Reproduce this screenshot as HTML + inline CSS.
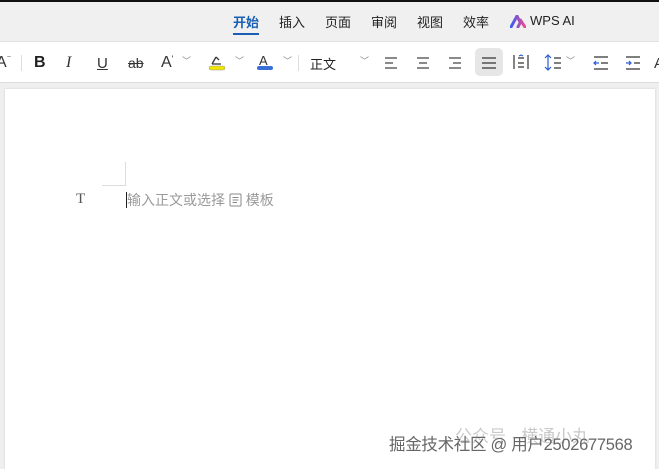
<!DOCTYPE html>
<html><head><meta charset="utf-8"><style>
*{margin:0;padding:0;box-sizing:border-box}
body{width:659px;height:465px;overflow:hidden;background:#efefef;font-family:"Liberation Sans","Noto Sans CJK SC",sans-serif;position:relative}
.top{position:absolute;left:0;top:0;width:659px;height:40px;background:#f0f0f0;border-top:2px solid #111}
.tab{position:absolute;top:10px;font-size:13px;color:#222}
.tb{position:absolute;left:0;top:41px;width:659px;height:42px;background:#fff;border-top:1px solid #e2e2e2;border-bottom:1px solid #ddd}
.page{position:absolute;left:5px;top:89px;width:650px;height:380px;background:#fff;box-shadow:0 0 2px #ccc}
.i{position:absolute;top:0;height:42px;display:flex;align-items:center;justify-content:center}
.car{position:absolute;font-size:9px;color:#888;top:12px}
</style></head><body>
<div class="top">
<div class="tab" style="left:233px;color:#1a5fb4;font-weight:bold">开始</div>
<div style="position:absolute;left:233px;top:31px;width:26px;height:2px;background:#1a5fb4"></div>
<div class="tab" style="left:279px">插入</div>
<div class="tab" style="left:325px">页面</div>
<div class="tab" style="left:371px">审阅</div>
<div class="tab" style="left:417px">视图</div>
<div class="tab" style="left:463px">效率</div>
<svg style="position:absolute;left:510px;top:13px" width="16" height="13"><defs><linearGradient id="g" x1="0" x2="1"><stop offset="0" stop-color="#3b5bf5"/><stop offset="1" stop-color="#f04a8a"/></linearGradient></defs><path d="M1 12 L7 1 L10 7 M8 12 L11 6 L15 12" stroke="url(#g)" stroke-width="3" fill="none" stroke-linecap="round"/></svg>
<div class="tab" style="left:530px;top:11px">WPS AI</div>
</div>
<div class="tb">
<div class="i" style="left:-4px;font-size:16px;color:#333">A<span style="font-size:9px;margin-top:-10px">⁻</span></div>
<div style="position:absolute;left:21px;top:13px;width:1px;height:16px;background:#ddd"></div>
<div class="i" style="left:34px;font-size:16px;font-weight:bold;color:#222">B</div>
<div class="i" style="left:66px;font-size:16px;font-style:italic;font-family:'Liberation Serif';color:#333">I</div>
<div class="i" style="left:97px;font-size:15px;text-decoration:underline;color:#333">U</div>
<div class="i" style="left:128px;font-size:14px;text-decoration:line-through;color:#333">ab</div>
<div class="i" style="left:161px;font-size:16px;color:#333">A<span style="font-size:9px;margin-top:-8px">ʹ</span></div>
<div class="car" style="left:182px">﹀</div>
<svg style="position:absolute;left:208px;top:12px" width="18" height="18"><path d="M4 10 L8 3 M8 3 L11 6 M4 10 L13 10" stroke="#333" stroke-width="1.3" fill="none"/><rect x="1" y="12" width="16" height="4" rx="2" fill="#f0e600" stroke="#999" stroke-width=".5"/></svg>
<div class="car" style="left:235px">﹀</div>
<svg style="position:absolute;left:256px;top:12px" width="18" height="18"><text x="3" y="11" font-size="13" fill="#333" font-family="Liberation Sans">A</text><rect x="1" y="12" width="16" height="4" rx="2" fill="#3a6fd8"/></svg>
<div class="car" style="left:283px">﹀</div>
<div style="position:absolute;left:298px;top:13px;width:1px;height:16px;background:#ddd"></div>
<div class="i" style="left:310px;font-size:13px;color:#222">正文</div>
<div class="car" style="left:360px">﹀</div>
<svg style="position:absolute;left:383px;top:14px" width="110" height="14" stroke="#444" stroke-width="1.2"><path d="M2 2H14M2 7H10M2 12H14M34 2H46M36 7H44M34 12H46M66 2H78M70 7H78M66 12H78"/></svg>
<div style="position:absolute;left:475px;top:6px;width:28px;height:28px;background:#e6e6e6;border-radius:5px"></div>
<svg style="position:absolute;left:481px;top:14px" width="16" height="14" stroke="#333" stroke-width="1.2"><path d="M1 2H15M1 7H15M1 12H15"/></svg>
<svg style="position:absolute;left:513px;top:12px" width="16" height="18" stroke="#333" stroke-width="1.2" fill="none"><path d="M1 1V15M15 1V15M5 4H11M5 9H11M5 13H11"/><path d="M6 2L8 1L10 2" stroke="#2a5bd7"/></svg>
<svg style="position:absolute;left:544px;top:12px" width="18" height="18" stroke="#333" stroke-width="1.2" fill="none"><path d="M4 1V16M1 4L4 1L7 4M1 13L4 16L7 13" stroke="#2a5bd7"/><path d="M10 4H17M10 9H17M10 14H17"/></svg>
<div class="car" style="left:566px">﹀</div>
<svg style="position:absolute;left:593px;top:14px" width="16" height="14" stroke="#333" stroke-width="1.2" fill="none"><path d="M1 1H15M8 7H15M1 13H15"/><path d="M6 7H1M3 5L1 7L3 9" stroke="#2a5bd7"/></svg>
<svg style="position:absolute;left:625px;top:14px" width="16" height="14" stroke="#333" stroke-width="1.2" fill="none"><path d="M1 1H15M9 7H15M1 13H15"/><path d="M1 7H6M4 5L6 7L4 9" stroke="#2a5bd7"/></svg>
<div class="i" style="left:654px;font-size:15px;color:#333">A</div>
</div>
<div class="page"></div>
<div style="position:absolute;left:102px;top:185px;width:24px;height:1px;background:#ddd"></div>
<div style="position:absolute;left:125px;top:162px;width:1px;height:24px;background:#ddd"></div>
<div style="position:absolute;left:76px;top:191px;font-family:'Liberation Serif';font-size:15px;color:#555">T</div>
<div style="position:absolute;left:126px;top:192px;width:1px;height:16px;background:#222"></div>
<div style="position:absolute;left:127px;top:190px;font-size:14px;color:#9a9a9a">输入正文或选择 <svg width="13" height="14" style="vertical-align:-2px" stroke="#888" fill="none"><rect x="1" y="1" width="11" height="12" rx="1"/><path d="M3.5 4.5H9.5M3.5 7H9.5M3.5 9.5H8"/></svg> 模板</div>
<div style="position:absolute;left:455px;top:422px;font-size:17px;color:rgba(150,150,150,.5)">公众号 · 横通小丸</div>
<div style="position:absolute;left:389px;top:431px;font-size:16.5px;letter-spacing:-0.3px;color:#666;text-shadow:0 0 1px #fff">掘金技术社区 @ 用户2502677568</div>
</body></html>
